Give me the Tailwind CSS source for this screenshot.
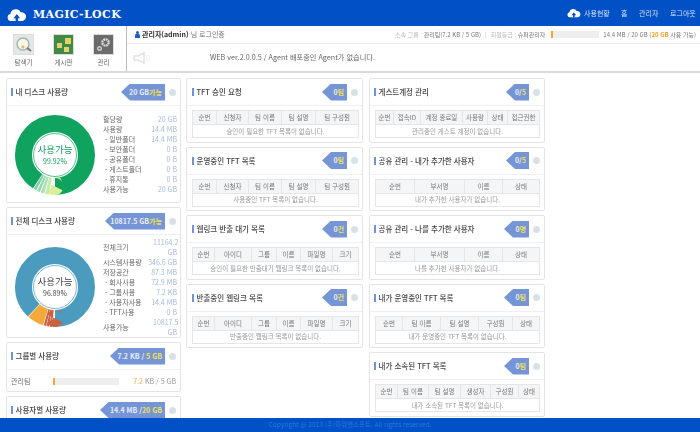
<!DOCTYPE html>
<html lang="ko">
<head>
    <meta charset="UTF-8">
    <title>MAGIC-LOCK</title>
    <script src="https://cdn.jsdelivr.net/npm/@tailwindcss/browser@4"></script>
</head>
<body class="h-[432px] w-[700px] overflow-hidden flex flex-col bg-white text-[#555] font-['Noto_Sans_CJK_KR','Noto_Sans',sans-serif] blur-[0.3px]">
    <!-- 상단 바 -->
    <header class="h-[26px] shrink-0 bg-[#0050c6] flex items-center justify-between pl-[7px] pr-[5px] text-white">
        <div class="flex items-center gap-[6px] mt-[3px]">
            <svg width="20" height="14" viewBox="0 0 20 14"><path fill="#fff" d="M4 13a3.6 3.6 0 0 1-.6-7.1A5.5 5.5 0 0 1 13.8 4.300A4.400 4.400 0 0 1 15.500 13z"/><path fill="#0050c6" d="M9.800 6l-3.300 4.200h2.100V13h2.400v-2.800h2.100z"/></svg>
            <span class="font-['DejaVu_Serif',serif] font-bold text-[11px] tracking-[0.4px] leading-none whitespace-nowrap">MAGIC-LOCK</span>
        </div>
        <nav class="flex items-center text-[7px] text-[#d5e2f7] whitespace-nowrap">
            <svg class="mr-[3px]" width="14" height="10" viewBox="0 0 20 14"><path fill="#fff" d="M4 13a3.6 3.6 0 0 1-.6-7.1A5.5 5.5 0 0 1 13.8 4.300A4.400 4.400 0 0 1 15.500 13z"/><path fill="#0050c6" d="M9.800 6l-3.300 4.200h2.100V13h2.400v-2.800h2.100z"/></svg>
            <span class="w-[25px]">사용현황</span>
            <span class="ml-[12px] w-[6px]">홈</span>
            <span class="ml-[12px] w-[19px]">관리자</span>
            <span class="ml-[12px] w-[25px]">로그아웃</span>
        </nav>
    </header>

    <!-- 툴바 -->
    <div class="h-[47px] shrink-0 flex border-b-2 border-[#d8dadd]">
        <div class="w-[127px] shrink-0 border-r border-[#bbb] flex pl-[13px] pt-[8px] gap-[19px]">
            <div class="w-[21px] flex flex-col items-center text-[6.500px] text-[#666]">
                <div class="w-[21px] h-[21px] bg-[#e6e6e6] border border-[#ddd] flex items-center justify-center">
                    <svg width="17" height="17" viewBox="0 0 17 17"><circle cx="8" cy="8" r="6" fill="#f7f5e6" stroke="#9fb8b4" stroke-width="1.500"/><circle cx="8" cy="11" r="1.500" fill="#e5b95c"/><path d="M12 12l4 3" stroke="#777" stroke-width="2"/></svg>
                </div>
                <span class="mt-[2px] leading-[10px] whitespace-nowrap">탐색기</span>
            </div>
            <div class="w-[21px] flex flex-col items-center text-[6.500px] text-[#666]">
                <div class="w-[21px] h-[21px] bg-[#3f8a46] border border-[#ddd] relative">
                    <span class="absolute left-[3px] top-[8px] w-[5px] h-[5px] bg-[#e2d272]"></span>
                    <span class="absolute left-[11px] top-[3px] w-[6px] h-[6px] bg-[#e8cf63]"></span>
                    <span class="absolute left-[10px] top-[12px] w-[5px] h-[5px] bg-[#e2d272]"></span>
                </div>
                <span class="mt-[2px] leading-[10px] whitespace-nowrap">게시판</span>
            </div>
            <div class="w-[21px] flex flex-col items-center text-[6.500px] text-[#666]">
                <div class="w-[21px] h-[21px] bg-[#6b6b6b] border border-[#ddd] flex items-center justify-center">
                    <svg width="17" height="17" viewBox="0 0 17 17"><circle cx="10.500" cy="6.500" r="3.200" fill="none" stroke="#ddd" stroke-width="2.200" stroke-dasharray="1.800 0.700"/><circle cx="4.500" cy="12.500" r="1.800" fill="none" stroke="#ccc" stroke-width="1.400"/></svg>
                </div>
                <span class="mt-[2px] leading-[10px] whitespace-nowrap">관리</span>
            </div>
        </div>
        <div class="flex-1 flex flex-col">
            <div class="h-[18px] border-b border-[#eee] flex items-center justify-between pl-[8px] pr-[4px] text-[6px] leading-none">
                <div class="flex items-center gap-[2px] text-[7px]">
                    <svg width="5" height="7" viewBox="0 0 5 7"><circle cx="2.500" cy="1.500" r="1.500" fill="#1d5fc0"/><path fill="#1d5fc0" d="M0 7V4.500a2.500 2 0 0 1 5 0V7z"/></svg>
                    <span class="font-bold text-[#333]">관리자(admin)</span><span class="text-[#777]">님 로그인중</span>
                </div>
                <div class="flex items-center text-[#777] whitespace-nowrap">
                    <span class="text-[#bbb]">소속 그룹 :&nbsp;</span><span>관리팀(7.2 KB / 5 GB)</span>
                    <span class="text-[#ccc] mx-[4px]">|</span>
                    <span class="text-[#bbb]">회원등급 :&nbsp;</span><span>슈퍼관리자</span>
                    <div class="w-[48px] h-[7px] bg-[#eee] ml-[6px] mr-[4px]"><div class="w-[2px] h-full bg-[#f0a830]"></div></div>
                    <span>14.4 MB / 20 GB (<b class="text-[#f0a020]">20 GB</b> 사용 가능)</span>
                </div>
            </div>
            <div class="flex-1 flex items-center pl-[6px] text-[7.200px] text-[#666]">
                <svg width="18" height="12" viewBox="0 0 18 12"><path fill="none" stroke="#e2e2e2" stroke-width="1.500" d="M1 4h4l6-3v10L5 8H1z"/><path stroke="#eee" stroke-width="1" d="M14 3v6M16.500 3v6"/></svg>
                <span class="ml-[59px] whitespace-nowrap">WEB ver.2.0.0.5 / Agent 배포중인 Agent가 없습니다.</span>
            </div>
        </div>
    </div>

    <!-- 본문 -->
    <main class="flex-1 min-h-0 overflow-hidden flex items-start pl-[6px] pt-[5px] gap-[5px]">
        <div id="col1" class="w-[175px] shrink-0 flex flex-col gap-[4px]"></div>
        <div id="col2" class="w-[177px] shrink-0 mr-[1px] flex flex-col gap-[4px]"></div>
        <div id="col3" class="w-[176px] shrink-0 flex flex-col gap-[4px]"></div>
    </main>

    <footer class="h-[14px] shrink-0 bg-[#0050c6] flex items-center justify-center text-[6.500px] text-[#2f78dc]">
        Copyright @ 2013 (주)파워앤소프트. All rights reserved.
    </footer>

    <script>
        function cabecera(titulo, badge, ancho, margen) {
            return `
                <div class="h-[27px] flex items-center border-b border-[#f0f0f0] pr-[4px] ${margen}">
                    <span class="w-[1.500px] h-[8px] bg-[#6f93d6] mr-[3px]"></span>
                    <span class="flex-1 text-[7.500px] font-medium text-[#444] whitespace-nowrap">${titulo}</span>
                    <span class="h-[17px] bg-[#7595d6] text-[7px] font-bold text-[#e8eefa] flex items-center justify-end pr-[3px] whitespace-nowrap [clip-path:polygon(9px_0,100%_0,100%_100%,9px_100%,0_50%)]" style="width:${ancho}px">${badge}</span>
                    <span class="w-[7px] h-[7px] rounded-full bg-[#d8e0e8] ml-[4px] shrink-0"></span>
                </div>`;
        }

        function tarjetaTabla(titulo, badge, ancho, columnas, mensaje, margen) {
            const ths = columnas.map(c => `<th class="border border-[#e6e6e6] bg-[#f4f5f6] font-normal h-[14px] p-0" style="width:${c[1]}px">${c[0]}</th>`).join("");
            return `
                <section class="h-[64.500px] border border-[#e2e4e6] rounded-[2px] overflow-hidden">
                    ${cabecera(titulo, badge, ancho, margen)}
                    <div class="px-[5px] pt-[4px]">
                        <table class="table-fixed w-full border-collapse text-[6.500px] text-[#777] text-center leading-none">
                            <thead><tr>${ths}</tr></thead>
                            <tbody><tr><td colspan="${columnas.length}" class="border border-[#e6e6e6] h-[13px] p-0 text-[#999]">${mensaje}</td></tr></tbody>
                        </table>
                    </div>
                </section>`;
        }

        function dona(segmentos, anillo, texto, color) {
            const arcos = segmentos.map(s => `<circle cx="41" cy="41" r="31.500" fill="none" stroke="${s[2]}" stroke-width="17" pathLength="100" stroke-dasharray="${s[1] - s[0]} ${100 - (s[1] - s[0])}" stroke-dashoffset="${25 - s[0]}"/>`).join("");
            return `
                <div class="relative w-[82px] h-[82px] shrink-0">
                    <svg width="82" height="82" viewBox="0 0 82 82">${arcos}<circle cx="41" cy="41" r="21.500" fill="none" stroke="${anillo}" stroke-width="0.700"/></svg>
                    <div class="absolute inset-0 flex flex-col items-center justify-center leading-none ${color}">
                        <span class="text-[9.500px]">사용가능</span>
                        <span class="text-[7px] mt-[3px]">${texto}</span>
                    </div>
                </div>`;
        }

        function lista(filas) {
            return `<div class="flex-1 text-[7px] leading-[10px]">` + filas.map(f => `
                <div class="flex justify-between items-center ${f[2] || "h-[10px]"}">
                    <span class="text-[#666] whitespace-nowrap">${f[0]}</span>
                    <span class="text-[#a5b9da] text-right ${f[2] ? "w-[24px]" : ""}">${f[1]}</span>
                </div>`).join("") + `</div>`;
        }

        const verde = [[0, 50, "#10a35f"], [50, 52.200, "#d8f09c"], [52.500, 54, "#c5ebb0"], [54.400, 55.800, "#abe1b4"], [56.200, 57.400, "#94d8ae"], [57.800, 59, "#7fd0a4"], [59.300, 100, "#10a35f"]];
        const azul = [[0, 50, "#4b9bbe"], [50, 51, "#c9623f"], [51.200, 52.200, "#c9623f"], [52.400, 53.400, "#c9623f"], [53.600, 54.600, "#c9623f"], [54.900, 61.500, "#f4a93c"], [61.800, 100, "#4b9bbe"]];

        document.getElementById("col1").innerHTML = `
            <section class="h-[125px] border border-[#e2e4e6] rounded-[2px]">
                ${cabecera("내 디스크 사용량", '20 GB<span class="text-[#f2e24a]">가능</span>', 44, "pl-[4px]")}
                <div class="flex items-start pl-[7px] pr-[3px] pt-[8px] gap-[7px]">
                    ${dona(verde, "#10a35f", "99.92%", "text-[#169a5e]")}
                    ${lista([["할당량", "20 GB"], ["사용량", "14.4 MB"], ["&nbsp;- 일반폴더", "14.4 MB"], ["&nbsp;- 보안폴더", "0 B"], ["&nbsp;- 공유폴더", "0 B"], ["&nbsp;- 게스트폴더", "0 B"], ["&nbsp;- 휴지통", "0 B"], ["사용가능", "20 GB"]])}
                </div>
            </section>
            <section class="h-[131px] border border-[#e2e4e6] rounded-[2px]">
                ${cabecera("전체 디스크 사용량", '10817.5 GB<span class="text-[#f2e24a]">가능</span>', 60, "pl-[4px]")}
                <div class="flex items-start pl-[7px] pr-[3px] pt-[2px] gap-[7px]">
                    <div class="pt-[9px]">${dona(azul, "#4b9bbe", "96.89%", "text-[#444]")}</div>
                    ${lista([["전체크기", "11164.2 GB", "h-[20px]"], ["시스템사용량", "346.6 GB"], ["저장공간", "87.3 MB"], ["&nbsp;- 회사사용", "72.9 MB"], ["&nbsp;- 그룹사용", "7.2 KB"], ["&nbsp;- 사용자사용", "14.4 MB"], ["&nbsp;- TFT사용", "0 B"], ["사용가능", "10817.5 GB", "h-[20px]"]])}
                </div>
            </section>
            <section class="h-[50px] border border-[#e2e4e6] rounded-[2px]">
                ${cabecera("그룹별 사용량", '7.2 KB / <span class="text-[#f2e24a]">&nbsp;5 GB</span>', 55, "pl-[4px]")}
                <div class="flex items-center h-[22px] pl-[4px] pr-[4px] text-[7px]">
                    <span class="w-[42px] text-[#666]">관리팀</span>
                    <div class="w-[66px] h-[7px] bg-[#eee]"><div class="w-[2px] h-full bg-[#f0a830]"></div></div>
                    <span class="flex-1 text-right text-[#999]"><span class="text-[#e8b040]">7.2</span> KB / 5 GB</span>
                </div>
            </section>
            <section class="h-[40px] border border-[#e2e4e6] rounded-[2px]">
                ${cabecera("사용자별 사용량", '14.4 MB / <span class="text-[#f2e24a]">20 GB</span>', 65, "pl-[4px]")}
            </section>`;

        const yel = t => `<span class="text-[#f2e24a]">${t}</span>`;
        const tft = [["순번", 24], ["신청자", 32], ["팀 이름", 33], ["팀 설명", 34], ["팀 구성원", 43]];
        const cap = [["순번", 22], ["아이디", 37], ["그룹", 25], ["이름", 24], ["파일명", 32], ["크기", 26]];
        const usr = [["순번", 39], ["부서명", 50], ["이름", 38], ["상태", 37]];
        const m2 = "pl-[5px]", m3 = "pl-[4px]";

        document.getElementById("col2").innerHTML =
            tarjetaTabla("TFT 승인 요청", "0 " + yel("팀"), 25, tft, "승인이 필요한 TFT 목록이 없습니다.", m2) +
            tarjetaTabla("운영중인 TFT 목록", "0 " + yel("팀"), 25, tft, "사용중인 TFT 목록이 없습니다.", m2) +
            tarjetaTabla("웹링크 반출 대기 목록", "0 " + yel("건"), 25, cap, "승인이 필요한 반출대기 웹링크 목록이 없습니다.", m2) +
            tarjetaTabla("반출중인 웹링크 목록", "0 " + yel("건"), 25, cap, "반출중인 웹링크 목록이 없습니다.", m2);

        document.getElementById("col3").innerHTML =
            tarjetaTabla("게스트계정 관리", "0/" + yel("5"), 23, [["순번", 18], ["접속ID", 27], ["계정 종료일", 42], ["사용량", 25], ["상태", 20], ["접근권한", 32]], "관리중인 게스트 계정이 없습니다.", m3) +
            tarjetaTabla("공유 관리 - 내가 추가한 사용자", "0/" + yel("5"), 23, usr, "내가 추가한 사용자가 없습니다.", m3) +
            tarjetaTabla("공유 관리 - 나를 추가한 사용자", "0 " + yel("명"), 25, usr, "나를 추가한 사용자가 없습니다.", m3) +
            tarjetaTabla("내가 운영중인 TFT 목록", "0 " + yel("팀"), 25, [["순번", 27], ["팀 이름", 38], ["팀 설명", 38], ["구성원", 34], ["상태", 27]], "내가 운영중인 TFT 목록이 없습니다.", m3) +
            tarjetaTabla("내가 소속된 TFT 목록", "0 " + yel("팀"), 25, [["순번", 22], ["팀 이름", 31], ["팀 설명", 32], ["생성자", 30], ["구성원", 28], ["상태", 21]], "내가 소속된 TFT 목록이 없습니다.", m3);
    </script>
</body>
</html>
